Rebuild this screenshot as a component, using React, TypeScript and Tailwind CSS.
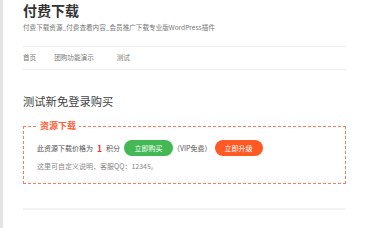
export default function App() {
  return (
    <div className="w-[368px] h-[228px] overflow-hidden bg-white border-l-[3px] border-[#e4e4e4] font-['Noto_Sans_CJK_SC',sans-serif]">
      <div className="ml-[20px] w-[323px] flex flex-col">
        {/* Kopfbereich */}
        <h1 className="pt-[1px] text-[14px] leading-[18px] font-bold text-[#333]">付费下载</h1>
        <p className="mt-[3px] text-[6.6px] leading-[10px] text-[#777]">
          付费下载资源_付费查看内容_会员推广下载专业版WordPress插件
        </p>

        {/* Navigation */}
        <nav className="mt-[14px] h-[24px] flex items-center border-y border-[#eeeeee] text-[6.6px] text-[#777]">
          <span>首页</span>
          <span className="ml-[18px]">团购功能演示</span>
          <span className="ml-[23px]">测试</span>
        </nav>

        <h2 className="mt-[24px] text-[11.3px] leading-[14px] text-[#444]">测试新免登录购买</h2>

        {/* Download-Box */}
        <div className="relative mt-[18px] border border-dashed border-[color:#ff7a57] px-[13px] pt-[13px] pb-[12px]">
          <span className="absolute left-[13px] top-[-7px] bg-white px-[3px] text-[9px] leading-[12px] font-bold text-[#ff5f3a]">
            资源下载
          </span>
          <div className="flex items-center h-[16px] text-[7px] text-[#555]">
            <span>此资源下载价格为</span>
            <span className="mx-[4px] text-[8.5px] font-bold text-[#ff2a2a]">1</span>
            <span>积分</span>
            <button className="ml-[4px] h-[16px] w-[49px] rounded-full bg-[#43b854] text-white text-[7px]">立即购买</button>
            <span>（VIP免费）</span>
            <button className="ml-[3px] h-[16px] w-[48px] rounded-full bg-[#ff5a26] text-white text-[7px]">立即升级</button>
          </div>
          <p className="mt-[5px] text-[7px] leading-[10px] text-[#888]">这里可自定义说明，客服QQ：12345。</p>
        </div>

        <div className="mt-[24px] h-[2px] bg-[#f3f3f3]" />
      </div>
    </div>
  )
}
